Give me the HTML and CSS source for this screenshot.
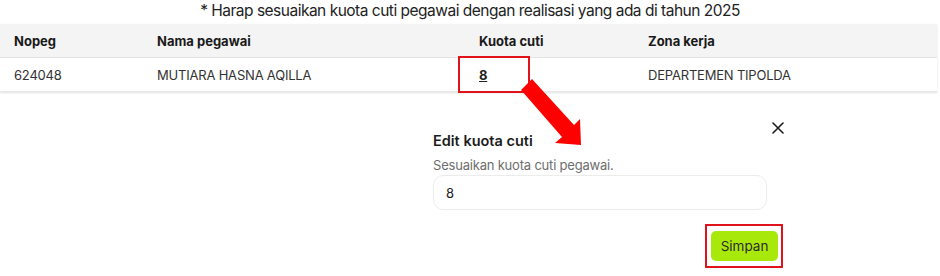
FILE: index.html
```html
<!DOCTYPE html>
<html lang="id">
<head>
    <meta charset="UTF-8">
    <meta name="viewport" content="width=device-width, initial-scale=1.0">
    <title>Edit kuota cuti</title>
    <link rel="stylesheet" href="styles.css">
</head>
<body>
    <p class="note">* Harap sesuaikan kuota cuti pegawai dengan realisasi yang ada di tahun 2025</p>

    <table class="quota-table">
        <thead>
            <tr>
                <th class="col-nopeg">Nopeg</th>
                <th class="col-nama">Nama pegawai</th>
                <th class="col-kuota">Kuota cuti</th>
                <th>Zona kerja</th>
            </tr>
        </thead>
        <tbody>
            <tr>
                <td>624048</td>
                <td>MUTIARA HASNA AQILLA</td>
                <td><a href="#" class="quota-link">8</a></td>
                <td>DEPARTEMEN TIPOLDA</td>
            </tr>
        </tbody>
    </table>

    <div class="dialog">
        <button class="close" aria-label="Tutup">
            <svg width="12" height="12" viewBox="0 0 12 12"><path d="M1 1L11 11M11 1L1 11" stroke="#1c1c1c" stroke-width="1.6" stroke-linecap="round"/></svg>
        </button>
        <h3>Edit kuota cuti</h3>
        <p class="hint">Sesuaikan kuota cuti pegawai.</p>
        <input type="text" class="quota-input" value="8">
        <div class="actions">
            <span class="mark-btn"><button class="save">Simpan</button></span>
        </div>
    </div>

    <!-- annotation overlay -->
    <div class="mark-cell"></div>
    <svg class="arrow" width="940" height="276" viewBox="0 0 940 276">
        <polygon points="521,90 532,79 574,125 580,119 581,145 555,143 562,137" fill="#ff0000"/>
    </svg>
</body>
</html>
```

FILE: styles.css
```css
body {
    margin: 0;
    font-family: Inter, "Noto Sans", sans-serif;
    color: #1f1f1f;
    background: #fff;
    position: relative;
    width: 940px;
    height: 276px;
    overflow: hidden;
}
.note {
    margin: 0;
    height: 24px;
    line-height: 21px;
    text-align: center;
    font-size: 15.5px;
    letter-spacing: -0.5px;
    color: #222;
}
.quota-table {
    width: 937px;
    border-collapse: collapse;
    font-size: 13px;
    box-shadow: 0 1px 2px rgba(0, 0, 0, 0.12);
}
.quota-table th {
    background: #f4f4f4;
    text-align: left;
    font-weight: 700;
    height: 33px;
    padding: 0 0 0 14px;
    color: #1a1a1a;
    border-bottom: 1px solid #e4e4e4;
}
.quota-table td {
    height: 33px;
    padding: 0 0 0 14px;
    color: #333;
    letter-spacing: -0.2px;
    border-bottom: 1px solid #e8e8e8;
}
.col-nopeg { width: 129px; }
.col-nama { width: 308px; }
.col-kuota { width: 155px; }
.quota-link {
    color: #222;
    font-weight: 700;
    text-decoration: underline;
}
.dialog {
    position: relative;
    width: 346px;
    margin: 40px 0 0 433px;
}
.close {
    position: absolute;
    right: -6px;
    top: -10px;
    background: none;
    border: none;
    padding: 0;
    width: 14px;
    height: 14px;
}
.dialog h3 {
    margin: 0;
    font-size: 14.5px;
    font-weight: 600;
    line-height: 18px;
    color: #1c1c1c;
}
.hint {
    margin: 7px 0 2px;
    font-size: 13px;
    line-height: 16px;
    color: #6e6e6e;
    letter-spacing: -0.2px;
}
.quota-input {
    display: block;
    box-sizing: border-box;
    width: 334px;
    height: 35px;
    padding: 0 12px;
    border: 1px solid #ececec;
    border-radius: 10px;
    font-family: inherit;
    font-size: 13px;
    color: #222;
}
.actions {
    display: flex;
    justify-content: flex-end;
    margin-top: 14px;
}
.mark-btn {
    display: inline-block;
    padding: 5px 3px 5px 4px;
    border: 2px solid #e0121b;
    margin-right: -4px;
}
.save {
    display: block;
    width: 67px;
    height: 30px;
    border: none;
    border-radius: 5px;
    background: #a9e80b;
    color: #2a2a2a;
    font-family: inherit;
    font-size: 13.5px;
}
.mark-cell {
    position: absolute;
    left: 458px;
    top: 56px;
    width: 68px;
    height: 33px;
    border: 2px solid #e0121b;
}
.arrow {
    position: absolute;
    left: 0;
    top: 0;
}
```
